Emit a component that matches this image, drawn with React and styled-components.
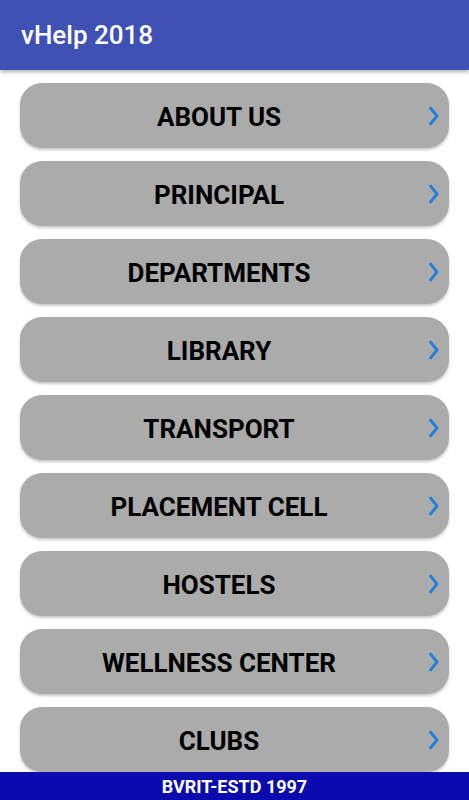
import React from 'react';
import styled, { createGlobalStyle } from 'styled-components';

const items = [
    'ABOUT US',
    'PRINCIPAL',
    'DEPARTMENTS',
    'LIBRARY',
    'TRANSPORT',
    'PLACEMENT CELL',
    'HOSTELS',
    'WELLNESS CENTER',
    'CLUBS'
];

const Chevron = () => (
    <svg width="12" height="20" viewBox="0 0 12 20">
        <path d="M2.5 2 L9 10 L2.5 18" fill="none" stroke="#1E7FE0" strokeWidth="2.8" strokeLinecap="round" strokeLinejoin="round" />
    </svg>
);

const App = () => {
    return (
        <Screen>
            <GlobalStyle />
            <AppBar>
                <Title>vHelp 2018</Title>
            </AppBar>
            <List>
                {
                    items.map(item =>
                        <MenuButton key={item}>
                            <Label>{item}</Label>
                            <Arrow><Chevron /></Arrow>
                        </MenuButton>
                    )
                }
            </List>
            <Footer>BVRIT-ESTD 1997</Footer>
        </Screen>
    )
}

export default App;


const GlobalStyle = createGlobalStyle`
body{
    margin:0;
    font-family: Roboto, "Noto Sans", sans-serif;
    background:#fff;
}
`

const Screen = styled.div`
  height: 100vh;
  display: flex;
  flex-direction: column;
  overflow: hidden;
`

const AppBar = styled.div`
  height: 70px;
  flex: 0 0 70px;
  background: #3F51B5;
  display: flex;
  align-items: center;
  padding-left: 21px;
  box-shadow: 0 2px 4px rgba(0,0,0,0.3);
  position: relative;
  z-index: 1;
`

const Title = styled.div`
  color: #fff;
  font-size: 26px;
  font-weight: 500;
`

const List = styled.div`
  flex: 1;
  overflow: hidden;
  display: flex;
  flex-direction: column;
  gap: 13px;
  padding: 13px 20px 0;
`

const MenuButton = styled.div`
  flex: 0 0 65px;
  height: 65px;
  display: flex;
  align-items: center;
  background: #ABABAB;
  border-radius: 22px;
  box-shadow: 0 2px 3px rgba(0,0,0,0.22);
`

const Label = styled.div`
  flex: 1;
  text-align: center;
  font-size: 26px;
  font-weight: 700;
  color: #000;
  padding-top: 2px;
`

const Arrow = styled.div`
  width: 31px;
  display: flex;
  align-items: center;
  justify-content: center;
`

const Footer = styled.div`
  height: 28px;
  flex: 0 0 28px;
  background: #0A0AAE;
  color: #fff;
  font-size: 18px;
  font-weight: 700;
  display: flex;
  align-items: center;
  justify-content: center;
  position: relative;
  z-index: 1;
`
